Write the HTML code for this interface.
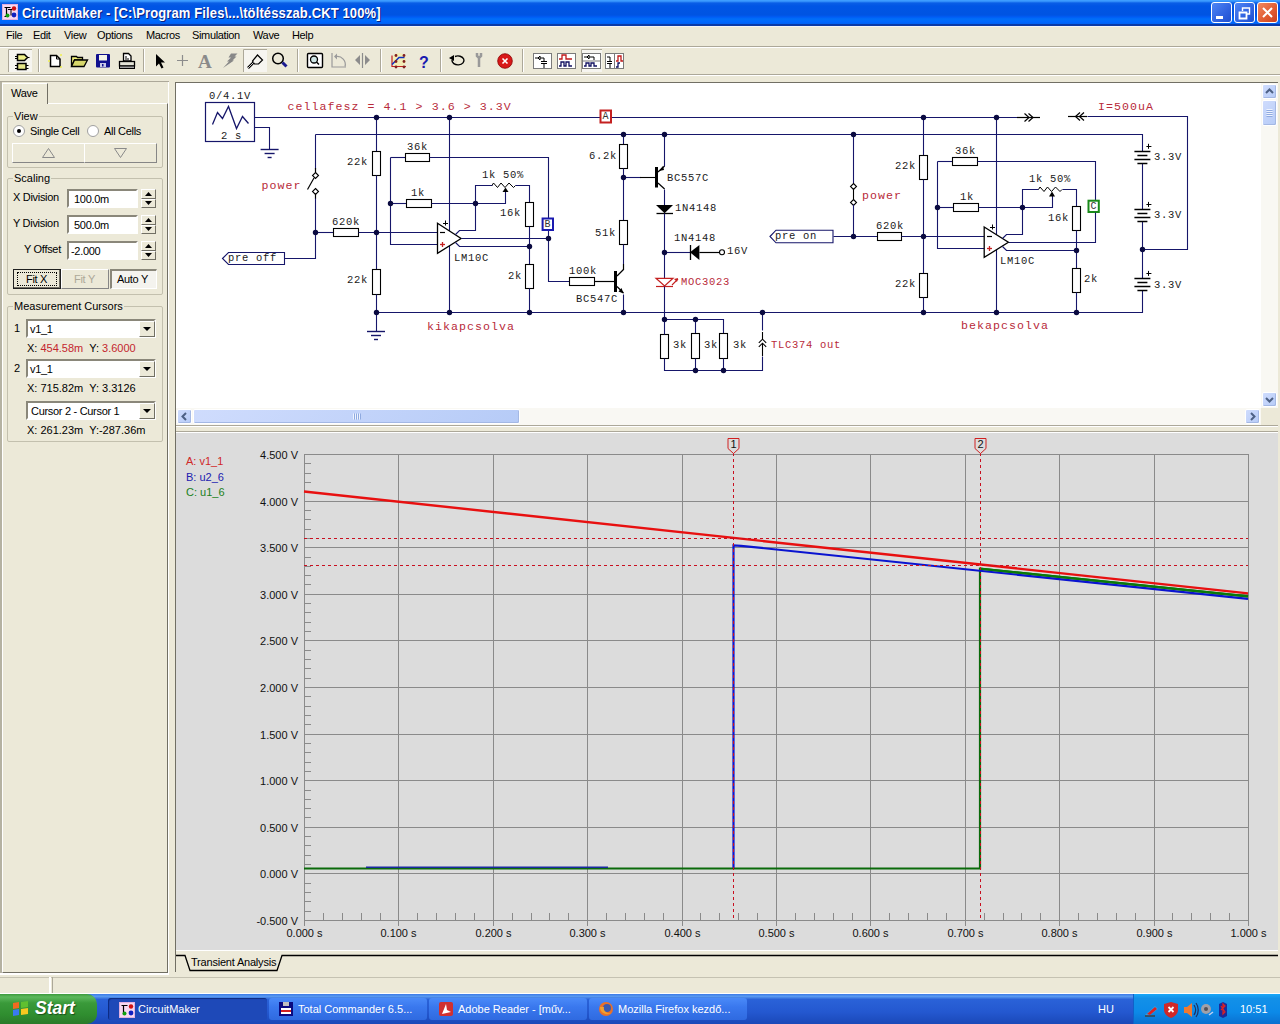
<!DOCTYPE html>
<html><head><meta charset="utf-8">
<style>
*{margin:0;padding:0;box-sizing:border-box}
html,body{width:1280px;height:1024px;overflow:hidden;background:#ece9d8;font-family:"Liberation Sans",sans-serif;font-size:11px;color:#000}
.a{position:absolute}
#title{left:0;top:0;width:1280px;height:26px;background:linear-gradient(#3d9cff 0px,#3d9cff 1px,#0a5ee6 3px,#0055e5 6px,#0054e2 15px,#005cf5 17px,#006ef8 19px,#0066ff 22px,#0062f4 23.5px,#0a3aa8 24.5px,#0a3aa8 26px)}
#title .t{left:22px;top:5px;color:#fff;font-weight:bold;font-size:13px;letter-spacing:0.12px;text-shadow:1px 1px #0a1e80;transform:scaleY(1.08);transform-origin:0 0}
.menu span{position:absolute;top:29px;font-size:11px;letter-spacing:-0.35px}
.tb{background:#ece9d8}
.sep{position:absolute;width:1px;background:#aca899;border-right:1px solid #fff}
.pressed{position:absolute;background:#f4f3ee;border:1px solid #b8b5a5;border-right-color:#fff;border-bottom-color:#fff}
.grp{position:absolute;border:1px solid #c3c0ae;border-radius:2px}
.grp .gt{position:absolute;left:6px;top:-7px;background:#ece9d8;padding:0 1px}
.tbx{position:absolute;background:#fff;border:1px solid #7f9db9}
.btn{position:absolute;border:1px solid #868686;background:#ece9d8;text-align:center}
.lbl{position:absolute;white-space:nowrap}
#left .lbl{letter-spacing:-0.3px}
.sbb{background:linear-gradient(135deg,#cfdcfd,#b6cbf7);border:1px solid #fff;border-radius:2px;box-shadow:inset -1px -1px 0 #a4b8e4}
</style></head><body>
<div class="a" style="left:0;top:0;width:1280px;height:1024px;overflow:hidden">

<!-- TITLE BAR -->
<div id="title" class="a">
  <div class="a t">CircuitMaker - [C:\Program Files\...\töltésszab.CKT 100%]</div>
</div>

<!-- MENU -->
<div class="a" style="left:0;top:26px;width:1280px;height:1px;background:#f4f4f6"></div>
<div class="menu">
<span style="left:6px">File</span><span style="left:33px">Edit</span><span style="left:64px">View</span><span style="left:97px">Options</span><span style="left:146px">Macros</span><span style="left:192px">Simulation</span><span style="left:253px">Wave</span><span style="left:292px">Help</span>
</div>
<div class="a" style="left:0;top:46px;width:1280px;height:1px;background:#aca899"></div>
<div class="a" style="left:0;top:47px;width:1280px;height:1px;background:#fff"></div>
<div class="a" style="left:0;top:74px;width:1280px;height:1px;background:#aca899"></div>
<div class="a" style="left:0;top:75px;width:1280px;height:1px;background:#fff"></div>

<svg class="a" style="left:0;top:44px" width="640" height="32" viewBox="0 44 640 32">
<rect x="8" y="49" width="24" height="23" fill="#f6f5f0"/>
<path d="M8.5 72V49.5H32" stroke="#aca899" fill="none"/>
<rect x="243" y="49" width="24" height="23" fill="#f6f5f0"/>
<path d="M243.5 72V49.5H267" stroke="#aca899" fill="none"/>
<rect x="581" y="49" width="21" height="23" fill="#f6f5f0"/>
<path d="M581.5 72V49.5H602" stroke="#aca899" fill="none"/>
<path d="M38.5 49v23" stroke="#aca899"/><path d="M39.5 49v23" stroke="#fff"/>
<path d="M143.5 49v23" stroke="#aca899"/><path d="M144.5 49v23" stroke="#fff"/>
<path d="M297.5 49v23" stroke="#aca899"/><path d="M298.5 49v23" stroke="#fff"/>
<path d="M380.5 49v23" stroke="#aca899"/><path d="M381.5 49v23" stroke="#fff"/>
<path d="M440.5 49v23" stroke="#aca899"/><path d="M441.5 49v23" stroke="#fff"/>
<path d="M522.5 49v23" stroke="#aca899"/><path d="M523.5 49v23" stroke="#fff"/>
<path d="M17.5 54.5h7l3 3l-3 3h-7z" fill="#eef08a" stroke="#000" stroke-width="1.5"/>
<path d="M15 56.5h2.5M15 58.5h2.5M27.5 57.5h2M15 65.5h2.5M15 68.5h2.5M26 65.5h2.5M26 68.5h2.5" stroke="#000" stroke-width="1.2"/>
<rect x="17.5" y="63.5" width="8.5" height="6" fill="#e6e78a" stroke="#000" stroke-width="1.5"/>
<path d="M50.5 55.5h6l3.5 3.5v7.5h-9.5z" fill="#fff" stroke="#000" stroke-width="1.5"/><path d="M56.5 55.5v3.5h3.5" fill="none" stroke="#000" stroke-width="1"/>
<circle cx="49" cy="61" r="1" fill="#f0f050"/><circle cx="61" cy="55" r="1" fill="#f0f050"/><circle cx="61" cy="67" r="1" fill="#f0f050"/>
<path d="M71.5 56.5h5l1 1h5v2.5h-8l-3 6.5z" fill="#f0f07a" stroke="#000" stroke-width="1.3"/><path d="M71.5 66.5l3-6.5h13l-3.5 6.5z" fill="#d6d66a" stroke="#000" stroke-width="1.3"/>
<rect x="96" y="54" width="14" height="13.5" rx="1" fill="#10108e"/><rect x="99" y="55" width="8" height="5.5" fill="#f4f4e8"/><rect x="100" y="63" width="6" height="4" fill="#c8c8e8"/><rect x="102" y="64" width="1.5" height="2.5" fill="#10108e"/>
<path d="M123.5 53.5h5l2.5 2.5v5h-7.5z" fill="#fff" stroke="#000" stroke-width="1.3"/><path d="M125 57h2M125 59h4" stroke="#000"/>
<rect x="119.5" y="61.5" width="15" height="4.5" fill="#e4e4d8" stroke="#000" stroke-width="1.3"/><rect x="119.5" y="66" width="15" height="2.5" fill="#a0a0a0" stroke="#000" stroke-width="1"/>
<path d="M156 54L156 66.5L159 63.5L161.5 68.5L163.5 67.5L161 62.5L165 62.5Z" fill="#000"/>
<path d="M177 60.5h11M182.5 55v11" stroke="#8c8c8c" stroke-width="1.2"/>
<text x="198" y="68" font-family="Liberation Serif" font-weight="bold" font-size="19" fill="#8a8a8a">A</text>
<path d="M231 53.5l6.5 0l-3 3l2 0l-4 4l1.5 0l-11 7.5l6-6.5l-2 0l4-4l-2.5 0z" fill="#888"/>
<path d="M257.5 55l5 5l-4 4l-4 0l-2-3z" fill="none" stroke="#000" stroke-width="1.2"/><path d="M253.5 62.5l-5.5 5.5" stroke="#000" stroke-width="2.5"/><path d="M253.5 62.5l-5.5 5.5" stroke="#fff" stroke-width="0.8"/>
<circle cx="278" cy="58.5" r="5.3" fill="none" stroke="#000" stroke-width="1.5"/><path d="M282.5 62.5l4 4" stroke="#1a1a90" stroke-width="3"/>
<rect x="307.5" y="53.5" width="15" height="14" rx="1" fill="#fff" stroke="#000" stroke-width="1.4"/><circle cx="314" cy="59.5" r="3.5" fill="#cfe6e6" stroke="#000" stroke-width="1.3"/><path d="M316.5 62l2.5 2.5" stroke="#000" stroke-width="1.5"/>
<path d="M332 53v14h14" fill="none" stroke="#9a9a9a" stroke-width="1.2"/><path d="M336 56.5a8 8 0 0 1 9 10" fill="none" stroke="#9a9a9a" stroke-width="1.2"/><path d="M334 56.5l3-3v6z" fill="#9a9a9a"/>
<path d="M355 60l5-5v10z M370 60l-5-5v10z" fill="#8c8c8c"/><path d="M362.5 53v15" stroke="#8c8c8c" stroke-width="1.2"/>
<circle cx="399" cy="60" r="7" fill="#f8f0a0" opacity="0.6"/><path d="M392 55.5v11h14" fill="none" stroke="#c02020" stroke-width="1.2"/><path d="M392 64.5l7-7h5.5" fill="none" stroke="#1030c0" stroke-width="1.5"/><g fill="#802020"><circle cx="396" cy="55.5" r="1.4"/><circle cx="404" cy="55.5" r="1.4"/><circle cx="396" cy="61.5" r="1.4"/><circle cx="404" cy="61.5" r="1.4"/><circle cx="396" cy="67" r="1.4"/><circle cx="404" cy="67" r="1.4"/></g>
<text x="419" y="68" font-family="Liberation Sans" font-weight="bold" font-size="16" fill="#1a1ab0">?</text>
<path d="M452 60a6 4.5 0 1 0 3-3.5" fill="none" stroke="#000" stroke-width="1.4"/><path d="M449 58l5-3v6z" fill="#000"/>
<path d="M477 53v3l2 2l2-2v-3M479 58v9" stroke="#999" stroke-width="2.5" fill="none"/>
<circle cx="505" cy="61" r="7.3" fill="#d81818"/><circle cx="505" cy="61" r="7.3" fill="none" stroke="#8a0000" stroke-width="0.8"/><path d="M502.5 58.5l5 5M507.5 58.5l-5 5" stroke="#fff" stroke-width="1.6"/>
<rect x="533.5" y="53.5" width="18" height="15" fill="#fff" stroke="#7a7a7a" stroke-width="1"/>
<rect x="557.5" y="53.5" width="18" height="15" fill="#fff" stroke="#7a7a7a" stroke-width="1"/>
<rect x="582.5" y="53.5" width="18" height="15" fill="#fff" stroke="#7a7a7a" stroke-width="1"/>
<rect x="605.5" y="53.5" width="18" height="15" fill="#fff" stroke="#7a7a7a" stroke-width="1"/>
<path d="M535 58h3l2-2v4l-2-2M540 58h4v3M541 61.5h6M541 63.5h6M544 64v4" fill="none" stroke="#000" stroke-width="1"/>
<path d="M559 59h3v-4h4v4h6" fill="none" stroke="#c01818" stroke-width="1.3"/><path d="M559 66h2v-4h3v4h2v-4h3v4h3" fill="none" stroke="#101060" stroke-width="1.3"/>
<path d="M584 57h3l2-2v4l-2-2M589 57h5v3" fill="none" stroke="#000" stroke-width="1"/><path d="M582.5 61h18" stroke="#7a7a7a"/><path d="M584 66h2v-3h3v3h2v-3h3v3h3" fill="none" stroke="#101060" stroke-width="1.3"/>
<path d="M607 57h3v4M607 61.5h5M607 63.5h5M610 64v4" fill="none" stroke="#000" stroke-width="1"/><path d="M614.5 53.5v15" stroke="#7a7a7a"/><path d="M616 61h2v-5h3v5h2" fill="none" stroke="#c01818" stroke-width="1.3"/><path d="M616 67h2v-4h2" fill="none" stroke="#101060" stroke-width="1.3"/>
</svg>
<!-- LEFT PANEL -->
<div id="left">
  <div class="a" style="left:0;top:81px;width:2px;height:893px;background:#b5b2a2"></div>
  <!-- tab page -->
  <div class="a" style="left:0;top:81px;width:169px;height:891px;border-top:1px solid #aca899"></div>
  <div class="a" style="left:2px;top:103px;width:166px;height:870px;border:1px solid #fff;border-right:1px solid #716f64;border-bottom:1px solid #716f64"></div>
  <div class="a" style="left:168px;top:82px;width:1px;height:892px;background:#fff"></div>
  <div class="a" style="left:0;top:973px;width:169px;height:2px;background:#fff"></div>
  <!-- tab -->
  <div class="a" style="left:2px;top:83px;width:46px;height:21px;background:#ece9d8;border-left:1px solid #fff;border-top:1px solid #fff;border-right:1px solid #716f64"></div>
  <div class="lbl" style="left:11px;top:87px">Wave</div>
  <!-- View group -->
  <div class="grp" style="left:7px;top:116px;width:156px;height:52px"><span class="gt" style="left:5px">View</span></div>
  <div class="a" style="left:13px;top:125px;width:12px;height:12px;border-radius:50%;background:#fff;border:1px solid #a0a0a0"></div>
  <div class="a" style="left:17px;top:129px;width:4px;height:4px;border-radius:50%;background:#000"></div>
  <div class="lbl" style="left:30px;top:125px">Single Cell</div>
  <div class="a" style="left:87px;top:125px;width:12px;height:12px;border-radius:50%;background:#fff;border:1px solid #a0a0a0"></div>
  <div class="lbl" style="left:104px;top:125px">All Cells</div>
  <div class="btn" style="left:12px;top:143px;width:73px;height:20px;border-color:#fff #868686 #868686 #fff"></div>
  <div class="btn" style="left:84px;top:143px;width:73px;height:20px;border-color:#fff #868686 #868686 #fff"></div>
  <svg class="a" style="left:0;top:0" width="170" height="170"><path d="M48.5 148.5 L54.5 157.5 L42.5 157.5 Z M114.5 148.5 L126.5 148.5 L120.5 157.5 Z" fill="none" stroke="#8a8a8a" stroke-width="1"/></svg>
  <!-- Scaling group -->
  <div class="grp" style="left:7px;top:178px;width:156px;height:117px"><span class="gt" style="left:5px">Scaling</span></div>
  <div class="lbl" style="left:13px;top:191px">X Division</div>
  <div class="lbl" style="left:13px;top:217px">Y Division</div>
  <div class="lbl" style="left:24px;top:243px">Y Offset</div>
  <div class="tbx" style="left:67px;top:189px;width:71px;height:19px;border:2px solid;border-color:#8a877a #fff #fff #8a877a"><span class="lbl" style="left:5px;top:2px">100.0m</span></div>
  <div class="tbx" style="left:67px;top:215px;width:71px;height:19px;border:2px solid;border-color:#8a877a #fff #fff #8a877a"><span class="lbl" style="left:5px;top:2px">500.0m</span></div>
  <div class="tbx" style="left:67px;top:241px;width:71px;height:19px;border:2px solid;border-color:#8a877a #fff #fff #8a877a"><span class="lbl" style="left:2px;top:2px">-2.000</span></div>
  <div class="a" style="left:141px;top:189px;width:15px;height:10px;background:#ece9d8;border:1px solid;border-color:#fff #716f64 #716f64 #fff"></div><div class="a" style="left:141px;top:199px;width:15px;height:9px;background:#ece9d8;border:1px solid;border-color:#fff #716f64 #716f64 #fff"></div><svg class="a" style="left:141px;top:189px" width="15" height="19"><path d="M4 7 L7.5 3 L11 7 Z M4 12 L11 12 L7.5 16 Z" fill="#000"/></svg><div class="a" style="left:141px;top:215px;width:15px;height:10px;background:#ece9d8;border:1px solid;border-color:#fff #716f64 #716f64 #fff"></div><div class="a" style="left:141px;top:225px;width:15px;height:9px;background:#ece9d8;border:1px solid;border-color:#fff #716f64 #716f64 #fff"></div><svg class="a" style="left:141px;top:215px" width="15" height="19"><path d="M4 7 L7.5 3 L11 7 Z M4 12 L11 12 L7.5 16 Z" fill="#000"/></svg><div class="a" style="left:141px;top:241px;width:15px;height:10px;background:#ece9d8;border:1px solid;border-color:#fff #716f64 #716f64 #fff"></div><div class="a" style="left:141px;top:251px;width:15px;height:9px;background:#ece9d8;border:1px solid;border-color:#fff #716f64 #716f64 #fff"></div><svg class="a" style="left:141px;top:241px" width="15" height="19"><path d="M4 7 L7.5 3 L11 7 Z M4 12 L11 12 L7.5 16 Z" fill="#000"/></svg>
  <div class="btn" style="left:13px;top:269px;width:48px;height:20px;border:1px solid #202020;box-shadow:inset -1px -1px 0 #716f64;background:#ece9d8"></div>
  <div class="a" style="left:17px;top:272px;width:40px;height:14px;border:1px dotted #000"></div>
  <div class="lbl" style="left:26px;top:273px">Fit X</div>
  <div class="btn" style="left:61px;top:269px;width:48px;height:20px;border-color:#fff #868686 #868686 #fff"></div>
  <div class="lbl" style="left:74px;top:273px;color:#aca899">Fit Y</div>
  <div class="btn" style="left:110px;top:269px;width:47px;height:20px;background:#f4f3ee;border-width:2px 1px 1px 2px;border-color:#8a877a #fff #fff #8a877a"></div>
  <div class="lbl" style="left:117px;top:273px">Auto Y</div>
  <!-- Measurement group -->
  <div class="grp" style="left:7px;top:306px;width:156px;height:136px"><span class="gt" style="left:5px">Measurement Cursors</span></div>
  <div class="lbl" style="left:14px;top:322px">1</div>
  <div class="tbx" style="left:26px;top:319px;width:130px;height:19px;border:2px solid;border-color:#8a877a #fff #fff #8a877a"><span class="lbl" style="left:2px;top:2px">v1_1</span></div>
  <div class="lbl" style="left:27px;top:342px;letter-spacing:0">X: <span style="color:#c4262e">454.58m</span>&nbsp; Y: <span style="color:#c4262e">3.6000</span></div>
  <div class="lbl" style="left:14px;top:362px">2</div>
  <div class="tbx" style="left:26px;top:359px;width:130px;height:19px;border:2px solid;border-color:#8a877a #fff #fff #8a877a"><span class="lbl" style="left:2px;top:2px">v1_1</span></div>
  <div class="lbl" style="left:27px;top:382px;letter-spacing:0">X: 715.82m&nbsp; Y: 3.3126</div>
  <div class="tbx" style="left:26px;top:401px;width:130px;height:19px;border:2px solid;border-color:#8a877a #fff #fff #8a877a"><span class="lbl" style="left:3px;top:2px">Cursor 2 - Cursor 1</span></div>
  <div class="lbl" style="left:27px;top:424px;letter-spacing:0">X: 261.23m&nbsp; Y:-287.36m</div>
  <div class="a" style="left:139px;top:321px;width:16px;height:16px;background:#ece9d8;border:1px solid;border-color:#fff #716f64 #716f64 #fff"></div><svg class="a" style="left:139px;top:321px" width="16" height="16"><path d="M4 6 L12 6 L8 10 Z" fill="#000"/></svg><div class="a" style="left:139px;top:361px;width:16px;height:16px;background:#ece9d8;border:1px solid;border-color:#fff #716f64 #716f64 #fff"></div><svg class="a" style="left:139px;top:361px" width="16" height="16"><path d="M4 6 L12 6 L8 10 Z" fill="#000"/></svg><div class="a" style="left:139px;top:403px;width:16px;height:16px;background:#ece9d8;border:1px solid;border-color:#fff #716f64 #716f64 #fff"></div><svg class="a" style="left:139px;top:403px" width="16" height="16"><path d="M4 6 L12 6 L8 10 Z" fill="#000"/></svg>
</div>

<!-- SCHEMATIC WINDOW -->
<div class="a" style="left:175px;top:82px;width:1103px;height:1px;background:#716f64"></div>
<div class="a" style="left:175px;top:82px;width:1px;height:890px;background:#716f64;z-index:5"></div>
<div class="a" style="left:176px;top:83px;width:1085px;height:325px;background:#fff;overflow:hidden">
<svg width="1085" height="325" viewBox="176 83 1085 325" style="position:absolute;left:0;top:0;font-family:'Liberation Mono',monospace">
<polyline points="254.5,117.5 1017.5,117.5" fill="none" stroke="#16166a" stroke-width="1.1"/>
<polyline points="315.5,134.5 1142.5,134.5 1142.5,151.5" fill="none" stroke="#16166a" stroke-width="1.1"/>
<polyline points="376.5,312.5 1142.5,312.5 1142.5,290.5" fill="none" stroke="#16166a" stroke-width="1.1"/>
<rect x="205.5" y="102.5" width="49" height="39" fill="#fff" stroke="#16166a" stroke-width="1.2"/>
<polyline points="212.5,124.5 217.5,112.5 222.5,118.5 228.5,106.5 236.5,128.5 242.5,116.5 248.5,123.5" fill="none" stroke="#16166a" stroke-width="1.3"/>
<text x="209" y="99" fill="#1a1a1a" font-size="10.5" letter-spacing="0.7" font-weight="normal" xml:space="preserve">0/4.1V</text>
<text x="221" y="139" fill="#1a1a1a" font-size="10.5" letter-spacing="0.7" font-weight="normal" xml:space="preserve">2 s</text>
<polyline points="254.5,127.5 269.5,127.5 269.5,149.5" fill="none" stroke="#16166a" stroke-width="1.1"/>
<line x1="260.6" y1="149.5" x2="278.6" y2="149.5" stroke="#16166a" stroke-width="1.4"/>
<line x1="264.6" y1="153.5" x2="274.6" y2="153.5" stroke="#16166a" stroke-width="1.4"/>
<line x1="267.6" y1="157.5" x2="271.6" y2="157.5" stroke="#16166a" stroke-width="1.4"/>
<text x="287.5" y="109.7" fill="#b82a3a" font-size="11.6" letter-spacing="1.05" font-weight="normal" xml:space="preserve">cellafesz = 4.1 &gt; 3.6 &gt; 3.3V</text>
<rect x="600.5" y="110.5" width="10.5" height="12.0" fill="#fff" stroke="#c42020" stroke-width="2"/>
<text x="602.5" y="119.0" fill="#333" font-size="10" letter-spacing="0.7" font-weight="normal" xml:space="preserve">A</text>
<line x1="1017" y1="117.5" x2="1040" y2="117.5" stroke="#000" stroke-width="1.2"/>
<polyline points="1024.5,113.5 1029,117.5 1024.5,121.5" fill="none" stroke="#000" stroke-width="1.2"/>
<polyline points="1028.5,113.5 1033,117.5 1028.5,121.5" fill="none" stroke="#000" stroke-width="1.2"/>
<line x1="1068" y1="116.5" x2="1087" y2="116.5" stroke="#000" stroke-width="1.2"/>
<polyline points="1080,112.5 1075.5,116.5 1080,120.5" fill="none" stroke="#000" stroke-width="1.2"/>
<polyline points="1084,112.5 1079.5,116.5 1084,120.5" fill="none" stroke="#000" stroke-width="1.2"/>
<polyline points="1087.5,116.5 1187.5,116.5 1187.5,249.5 1142.5,249.5" fill="none" stroke="#16166a" stroke-width="1.1"/>
<text x="1098" y="110" fill="#b82a3a" font-size="11.6" letter-spacing="1.05" font-weight="normal" xml:space="preserve">I=500uA</text>
<polyline points="315.5,134.5 315.5,169.5" fill="none" stroke="#16166a" stroke-width="1.1"/>
<line x1="315.5" y1="168" x2="315.5" y2="172.5" stroke="#000" stroke-width="1.2"/>
<polygon points="315.5,172.5 318.5,175.5 315.5,178.5 312.5,175.5" fill="#fff" stroke="#000" stroke-width="1.1"/>
<line x1="307.5" y1="189.5" x2="314" y2="178" stroke="#000" stroke-width="1.2"/>
<polygon points="315.5,188.5 318.5,191.5 315.5,194.5 312.5,191.5" fill="#fff" stroke="#000" stroke-width="1.1"/>
<line x1="315.5" y1="193.5" x2="315.5" y2="199" stroke="#000" stroke-width="1.2"/>
<polyline points="315.5,198.5 315.5,258.5 284.5,258.5" fill="none" stroke="#16166a" stroke-width="1.1"/>
<text x="261.5" y="189" fill="#b82a3a" font-size="11.6" letter-spacing="1.05" font-weight="normal" xml:space="preserve">power</text>
<polygon points="222.5,258.5 228.5,252.5 284.5,252.5 284.5,264.5 228.5,264.5" fill="#fff" stroke="#16166a" stroke-width="1.1"/>
<text x="228" y="261.0" fill="#1a1a1a" font-size="10.5" letter-spacing="0.7" font-weight="normal" xml:space="preserve">pre off</text>
<polyline points="315.5,232.5 333.5,232.5" fill="none" stroke="#16166a" stroke-width="1.1"/>
<rect x="333.5" y="228.5" width="25.0" height="8" fill="#fff" stroke="#000" stroke-width="1.1"/>
<polyline points="358.5,232.5 437.5,232.5" fill="none" stroke="#16166a" stroke-width="1.1"/>
<text x="332" y="225" fill="#1a1a1a" font-size="10.5" letter-spacing="0.7" font-weight="normal" xml:space="preserve">620k</text>
<polyline points="376.5,117.5 376.5,151.5" fill="none" stroke="#16166a" stroke-width="1.1"/>
<rect x="372.5" y="151.5" width="8" height="24.0" fill="#fff" stroke="#000" stroke-width="1.1"/>
<polyline points="376.5,175.5 376.5,269.5" fill="none" stroke="#16166a" stroke-width="1.1"/>
<rect x="372.5" y="269.5" width="8" height="25.0" fill="#fff" stroke="#000" stroke-width="1.1"/>
<polyline points="376.5,294.5 376.5,331.5" fill="none" stroke="#16166a" stroke-width="1.1"/>
<line x1="367" y1="331.5" x2="385" y2="331.5" stroke="#16166a" stroke-width="1.4"/>
<line x1="371" y1="335.5" x2="381" y2="335.5" stroke="#16166a" stroke-width="1.4"/>
<line x1="374" y1="339.5" x2="378" y2="339.5" stroke="#16166a" stroke-width="1.4"/>
<text x="347" y="165" fill="#1a1a1a" font-size="10.5" letter-spacing="0.7" font-weight="normal" xml:space="preserve">22k</text>
<text x="347" y="283" fill="#1a1a1a" font-size="10.5" letter-spacing="0.7" font-weight="normal" xml:space="preserve">22k</text>
<polyline points="390.5,157.5 405.5,157.5" fill="none" stroke="#16166a" stroke-width="1.1"/>
<rect x="405.5" y="153.5" width="24.0" height="8" fill="#fff" stroke="#000" stroke-width="1.1"/>
<polyline points="429.5,157.5 548.5,157.5 548.5,218.5" fill="none" stroke="#16166a" stroke-width="1.1"/>
<text x="407" y="150" fill="#1a1a1a" font-size="10.5" letter-spacing="0.7" font-weight="normal" xml:space="preserve">36k</text>
<polyline points="548.5,230.5 548.5,281.5 569.5,281.5" fill="none" stroke="#16166a" stroke-width="1.1"/>
<rect x="542.6" y="218.5" width="10.399999999999977" height="11.5" fill="#fff" stroke="#1a1ab0" stroke-width="2"/>
<text x="544.6" y="226.5" fill="#333" font-size="10" letter-spacing="0.7" font-weight="normal" xml:space="preserve">B</text>
<rect x="569.5" y="277.5" width="25.0" height="8" fill="#fff" stroke="#000" stroke-width="1.1"/>
<text x="569" y="274" fill="#1a1a1a" font-size="10.5" letter-spacing="0.7" font-weight="normal" xml:space="preserve">100k</text>
<polyline points="594.5,281.5 615.5,281.5" fill="none" stroke="#000" stroke-width="1.2"/>
<polyline points="390.5,157.5 390.5,244.5 437.5,244.5" fill="none" stroke="#16166a" stroke-width="1.1"/>
<polyline points="390.5,203.5 406.5,203.5" fill="none" stroke="#16166a" stroke-width="1.1"/>
<rect x="406.5" y="199.5" width="25.0" height="8" fill="#fff" stroke="#000" stroke-width="1.1"/>
<polyline points="431.5,203.5 505.5,203.5 505.5,191.5" fill="none" stroke="#16166a" stroke-width="1.1"/>
<text x="411" y="196" fill="#1a1a1a" font-size="10.5" letter-spacing="0.7" font-weight="normal" xml:space="preserve">1k</text>
<polyline points="475.5,203.5 475.5,185.5 492.5,185.5" fill="none" stroke="#16166a" stroke-width="1.1"/>
<polyline points="492.0,185.5 493.5,183.0 497.5,187.5 501.0,183.0 505.0,187.5 509.0,183.0 513.5,187.5 515.5,185.5" fill="none" stroke="#000" stroke-width="1"/>
<polyline points="515.5,185.5 529.5,185.5 529.5,202.5" fill="none" stroke="#16166a" stroke-width="1.1"/>
<polygon points="505.5,187.5 502.5,192 508.5,192" fill="#000"/>
<text x="482" y="178" fill="#1a1a1a" font-size="10.5" letter-spacing="0.7" font-weight="normal" xml:space="preserve">1k 50%</text>
<rect x="525.5" y="202.5" width="8" height="24.0" fill="#fff" stroke="#000" stroke-width="1.1"/>
<polyline points="529.5,226.5 529.5,264.5" fill="none" stroke="#16166a" stroke-width="1.1"/>
<rect x="525.5" y="264.5" width="8" height="24.0" fill="#fff" stroke="#000" stroke-width="1.1"/>
<polyline points="529.5,288.5 529.5,312.5" fill="none" stroke="#16166a" stroke-width="1.1"/>
<text x="500" y="216" fill="#1a1a1a" font-size="10.5" letter-spacing="0.7" font-weight="normal" xml:space="preserve">16k</text>
<text x="508" y="279" fill="#1a1a1a" font-size="10.5" letter-spacing="0.7" font-weight="normal" xml:space="preserve">2k</text>
<polyline points="449.5,117.5 449.5,312.5" fill="none" stroke="#16166a" stroke-width="1.1"/>
<polygon points="437.5,223.3 461.1,238.5 437.5,253.3" fill="#fff" stroke="#000" stroke-width="1.3"/>
<polyline points="461.5,238.5 548.5,238.5" fill="none" stroke="#16166a" stroke-width="1.1"/>
<polyline points="455.5,234.5 459.5,230.5 475.5,230.5 475.5,203.5" fill="none" stroke="#16166a" stroke-width="1.1"/>
<polyline points="455.5,242.5 459.5,246.5 529.5,246.5" fill="none" stroke="#16166a" stroke-width="1.1"/>
<line x1="440" y1="232.5" x2="445" y2="232.5" stroke="#000" stroke-width="1.2"/>
<line x1="440" y1="244.5" x2="445" y2="244.5" stroke="#c42020" stroke-width="1.3"/>
<line x1="442.5" y1="242" x2="442.5" y2="247" stroke="#c42020" stroke-width="1.3"/>
<line x1="443" y1="223.5" x2="448" y2="223.5" stroke="#000" stroke-width="1"/>
<line x1="445.5" y1="220.5" x2="445.5" y2="225.5" stroke="#000" stroke-width="1"/>
<text x="454" y="261" fill="#1a1a1a" font-size="10.5" letter-spacing="0.7" font-weight="normal" xml:space="preserve">LM10C</text>
<text x="427" y="330" fill="#b82a3a" font-size="11.6" letter-spacing="1.05" font-weight="normal" xml:space="preserve">kikapcsolva</text>
<polyline points="623.5,134.5 623.5,144.5" fill="none" stroke="#16166a" stroke-width="1.1"/>
<rect x="619.5" y="144.5" width="8" height="24.0" fill="#fff" stroke="#000" stroke-width="1.1"/>
<polyline points="623.5,168.5 623.5,220.5" fill="none" stroke="#16166a" stroke-width="1.1"/>
<rect x="619.5" y="220.5" width="8" height="24.0" fill="#fff" stroke="#000" stroke-width="1.1"/>
<polyline points="623.5,244.5 623.5,264.5" fill="none" stroke="#16166a" stroke-width="1.1"/>
<text x="589" y="159" fill="#1a1a1a" font-size="10.5" letter-spacing="0.7" font-weight="normal" xml:space="preserve">6.2k</text>
<text x="595" y="236" fill="#1a1a1a" font-size="10.5" letter-spacing="0.7" font-weight="normal" xml:space="preserve">51k</text>
<polyline points="623.5,177.5 641.5,177.5" fill="none" stroke="#16166a" stroke-width="1.1"/>
<line x1="640" y1="177.5" x2="655" y2="177.5" stroke="#000" stroke-width="1.1"/>
<rect x="655" y="167" width="3" height="20.5" fill="#000"/>
<line x1="658" y1="172" x2="664.6" y2="166" stroke="#000" stroke-width="1.2"/>
<polygon points="659,171 663,166 664,170" fill="#000"/>
<line x1="658" y1="183" x2="664.6" y2="189" stroke="#000" stroke-width="1.2"/>
<polyline points="664.5,134.5 664.5,166.5" fill="none" stroke="#16166a" stroke-width="1.1"/>
<polyline points="664.5,189.5 664.5,205.5" fill="none" stroke="#16166a" stroke-width="1.1"/>
<text x="667" y="181" fill="#1a1a1a" font-size="10.5" letter-spacing="0.7" font-weight="normal" xml:space="preserve">BC557C</text>
<polygon points="656,205 673,205 664.6,213.2" fill="#000"/>
<line x1="656.5" y1="213.5" x2="673" y2="213.5" stroke="#000" stroke-width="1.3"/>
<text x="675" y="211" fill="#1a1a1a" font-size="10.5" letter-spacing="0.7" font-weight="normal" xml:space="preserve">1N4148</text>
<polyline points="664.5,213.5 664.5,278.5" fill="none" stroke="#16166a" stroke-width="1.1"/>
<polyline points="664.5,252.5 690.5,252.5" fill="none" stroke="#16166a" stroke-width="1.1"/>
<polygon points="699.4,245 699.4,260 690,252.3" fill="#000"/>
<line x1="690.5" y1="245" x2="690.5" y2="260" stroke="#000" stroke-width="1.3"/>
<line x1="699.4" y1="252.5" x2="719.5" y2="252.5" stroke="#000" stroke-width="1.2"/>
<circle cx="722" cy="252.3" r="2.5" fill="#fff" stroke="#000" stroke-width="1.1"/>
<text x="674" y="241" fill="#1a1a1a" font-size="10.5" letter-spacing="0.7" font-weight="normal" xml:space="preserve">1N4148</text>
<text x="727" y="254" fill="#1a1a1a" font-size="10.5" letter-spacing="0.7" font-weight="normal" xml:space="preserve">16V</text>
<polygon points="656,278.3 673,278.3 664.6,286" fill="none" stroke="#c42020" stroke-width="1.2"/>
<line x1="656" y1="286.5" x2="673" y2="286.5" stroke="#c42020" stroke-width="1.2"/>
<line x1="672" y1="285" x2="678" y2="279" stroke="#c42020" stroke-width="1.1"/>
<polygon points="678,278 674,279 677,282" fill="#c42020"/>
<text x="681" y="285" fill="#b82a3a" font-size="10.5" letter-spacing="0.7" font-weight="normal" xml:space="preserve">MOC3023</text>
<polyline points="664.5,286.5 664.5,319.5 723.5,319.5 723.5,333.5" fill="none" stroke="#16166a" stroke-width="1.1"/>
<rect x="614" y="271" width="3" height="21" fill="#000"/>
<line x1="617" y1="276" x2="623.5" y2="269.5" stroke="#000" stroke-width="1.2"/>
<line x1="623.5" y1="264" x2="623.5" y2="270" stroke="#000" stroke-width="1.2"/>
<line x1="617" y1="286.5" x2="623.5" y2="293" stroke="#000" stroke-width="1.2"/>
<polygon points="623.5,293.5 618.5,291.5 621.5,288" fill="#000"/>
<polyline points="623.5,294.5 623.5,312.5" fill="none" stroke="#16166a" stroke-width="1.1"/>
<text x="576" y="302" fill="#1a1a1a" font-size="10.5" letter-spacing="0.7" font-weight="normal" xml:space="preserve">BC547C</text>
<rect x="660.5" y="334.5" width="8" height="24.0" fill="#fff" stroke="#000" stroke-width="1.1"/>
<polyline points="695.5,319.5 695.5,333.5" fill="none" stroke="#16166a" stroke-width="1.1"/>
<rect x="691.5" y="333.5" width="8" height="25.0" fill="#fff" stroke="#000" stroke-width="1.1"/>
<rect x="719.5" y="333.5" width="8" height="25.0" fill="#fff" stroke="#000" stroke-width="1.1"/>
<polyline points="664.5,319.5 664.5,334.5" fill="none" stroke="#16166a" stroke-width="1.1"/>
<polyline points="695.5,358.5 695.5,370.5" fill="none" stroke="#16166a" stroke-width="1.1"/>
<polyline points="723.5,358.5 723.5,370.5" fill="none" stroke="#16166a" stroke-width="1.1"/>
<text x="673" y="348" fill="#1a1a1a" font-size="10.5" letter-spacing="0.7" font-weight="normal" xml:space="preserve">3k</text>
<text x="704" y="348" fill="#1a1a1a" font-size="10.5" letter-spacing="0.7" font-weight="normal" xml:space="preserve">3k</text>
<text x="733" y="348" fill="#1a1a1a" font-size="10.5" letter-spacing="0.7" font-weight="normal" xml:space="preserve">3k</text>
<polyline points="664.5,358.5 664.5,370.5 762.5,370.5 762.5,356.5" fill="none" stroke="#16166a" stroke-width="1.1"/>
<polyline points="762.5,312.5 762.5,330.5" fill="none" stroke="#16166a" stroke-width="1.1"/>
<line x1="762.5" y1="332" x2="762.5" y2="339.5" stroke="#000" stroke-width="1.1"/>
<line x1="762.5" y1="343.5" x2="762.5" y2="356" stroke="#000" stroke-width="1.1"/>
<polyline points="758.8,342.8 762.5,339.2 766.2,342.8" fill="none" stroke="#000" stroke-width="1.1"/>
<polyline points="758.8,346.8 762.5,343.2 766.2,346.8" fill="none" stroke="#000" stroke-width="1.1"/>
<text x="771" y="348" fill="#b82a3a" font-size="10.5" letter-spacing="0.7" font-weight="normal" xml:space="preserve">TLC374 out</text>
<polyline points="853.5,134.5 853.5,183.5" fill="none" stroke="#16166a" stroke-width="1.1"/>
<polygon points="853.5,183.5 856.5,186.5 853.5,189.5 850.5,186.5" fill="#fff" stroke="#000" stroke-width="1.1"/>
<line x1="853.5" y1="188.5" x2="853.5" y2="199.5" stroke="#000" stroke-width="1.1"/>
<polygon points="853.5,199.5 856.5,202.5 853.5,205.5 850.5,202.5" fill="#fff" stroke="#000" stroke-width="1.1"/>
<polyline points="853.5,204.5 853.5,236.5" fill="none" stroke="#16166a" stroke-width="1.1"/>
<text x="862" y="199" fill="#b82a3a" font-size="11.6" letter-spacing="1.05" font-weight="normal" xml:space="preserve">power</text>
<polygon points="770,236.5 776,230.2 833,230.2 833,242.8 776,242.8" fill="#fff" stroke="#16166a" stroke-width="1.1"/>
<text x="775" y="239.3" fill="#1a1a1a" font-size="10.5" letter-spacing="0.7" font-weight="normal" xml:space="preserve">pre on</text>
<polyline points="833.5,236.5 877.5,236.5" fill="none" stroke="#16166a" stroke-width="1.1"/>
<rect x="877.5" y="232.5" width="24.0" height="8" fill="#fff" stroke="#000" stroke-width="1.1"/>
<polyline points="901.5,236.5 984.5,236.5" fill="none" stroke="#16166a" stroke-width="1.1"/>
<text x="876" y="229" fill="#1a1a1a" font-size="10.5" letter-spacing="0.7" font-weight="normal" xml:space="preserve">620k</text>
<polyline points="923.5,117.5 923.5,155.5" fill="none" stroke="#16166a" stroke-width="1.1"/>
<rect x="919.5" y="155.5" width="8" height="24.0" fill="#fff" stroke="#000" stroke-width="1.1"/>
<polyline points="923.5,179.5 923.5,273.5" fill="none" stroke="#16166a" stroke-width="1.1"/>
<rect x="919.5" y="273.5" width="8" height="24.0" fill="#fff" stroke="#000" stroke-width="1.1"/>
<polyline points="923.5,297.5 923.5,312.5" fill="none" stroke="#16166a" stroke-width="1.1"/>
<text x="895" y="169" fill="#1a1a1a" font-size="10.5" letter-spacing="0.7" font-weight="normal" xml:space="preserve">22k</text>
<text x="895" y="287" fill="#1a1a1a" font-size="10.5" letter-spacing="0.7" font-weight="normal" xml:space="preserve">22k</text>
<polyline points="937.5,161.5 952.5,161.5" fill="none" stroke="#16166a" stroke-width="1.1"/>
<rect x="952.5" y="157.5" width="25.0" height="8" fill="#fff" stroke="#000" stroke-width="1.1"/>
<polyline points="977.5,161.5 1095.5,161.5 1095.5,200.5" fill="none" stroke="#16166a" stroke-width="1.1"/>
<text x="955" y="154" fill="#1a1a1a" font-size="10.5" letter-spacing="0.7" font-weight="normal" xml:space="preserve">36k</text>
<rect x="1088.5" y="200.7" width="10.299999999999955" height="11.300000000000011" fill="#fff" stroke="#1a8a1a" stroke-width="2"/>
<text x="1090.5" y="208.5" fill="#333" font-size="10" letter-spacing="0.7" font-weight="normal" xml:space="preserve">C</text>
<polyline points="1095.5,212.5 1095.5,242.5 1008.5,242.5" fill="none" stroke="#16166a" stroke-width="1.1"/>
<polyline points="937.5,161.5 937.5,248.5 984.5,248.5" fill="none" stroke="#16166a" stroke-width="1.1"/>
<polyline points="937.5,207.5 953.5,207.5" fill="none" stroke="#16166a" stroke-width="1.1"/>
<rect x="953.5" y="203.5" width="25.0" height="8" fill="#fff" stroke="#000" stroke-width="1.1"/>
<polyline points="978.5,207.5 1052.5,207.5 1052.5,193.5" fill="none" stroke="#16166a" stroke-width="1.1"/>
<polygon points="1052,191.5 1049,196.5 1055,196.5" fill="#000"/>
<text x="960" y="200" fill="#1a1a1a" font-size="10.5" letter-spacing="0.7" font-weight="normal" xml:space="preserve">1k</text>
<polyline points="1022.5,207.5 1022.5,189.5 1038.5,189.5" fill="none" stroke="#16166a" stroke-width="1.1"/>
<polyline points="1038.5,189.5 1040.0,187.0 1044.0,191.5 1047.5,187.0 1051.5,191.5 1055.5,187.0 1060.0,191.5 1062.0,189.5" fill="none" stroke="#000" stroke-width="1"/>
<polyline points="1062.5,189.5 1076.5,189.5 1076.5,206.5" fill="none" stroke="#16166a" stroke-width="1.1"/>
<text x="1029" y="182" fill="#1a1a1a" font-size="10.5" letter-spacing="0.7" font-weight="normal" xml:space="preserve">1k 50%</text>
<rect x="1072.5" y="206.5" width="8" height="24.0" fill="#fff" stroke="#000" stroke-width="1.1"/>
<polyline points="1076.5,230.5 1076.5,268.5" fill="none" stroke="#16166a" stroke-width="1.1"/>
<rect x="1072.5" y="268.5" width="8" height="24.0" fill="#fff" stroke="#000" stroke-width="1.1"/>
<polyline points="1076.5,292.5 1076.5,312.5" fill="none" stroke="#16166a" stroke-width="1.1"/>
<text x="1048" y="221" fill="#1a1a1a" font-size="10.5" letter-spacing="0.7" font-weight="normal" xml:space="preserve">16k</text>
<text x="1084" y="282" fill="#1a1a1a" font-size="10.5" letter-spacing="0.7" font-weight="normal" xml:space="preserve">2k</text>
<polyline points="996.5,117.5 996.5,312.5" fill="none" stroke="#16166a" stroke-width="1.1"/>
<polygon points="984.2,227 1008.4,242.2 984.2,257.4" fill="#fff" stroke="#000" stroke-width="1.3"/>
<polyline points="1002.5,238.5 1006.5,234.5 1022.5,234.5 1022.5,207.5" fill="none" stroke="#16166a" stroke-width="1.1"/>
<polyline points="1002.5,246.5 1006.5,250.5 1076.5,250.5" fill="none" stroke="#16166a" stroke-width="1.1"/>
<line x1="987" y1="236.5" x2="992" y2="236.5" stroke="#000" stroke-width="1.2"/>
<line x1="987" y1="248.5" x2="992" y2="248.5" stroke="#c42020" stroke-width="1.3"/>
<line x1="989.5" y1="246" x2="989.5" y2="251" stroke="#c42020" stroke-width="1.3"/>
<line x1="990" y1="227.5" x2="995" y2="227.5" stroke="#000" stroke-width="1"/>
<line x1="992.5" y1="224.5" x2="992.5" y2="229.5" stroke="#000" stroke-width="1"/>
<text x="1000" y="264" fill="#1a1a1a" font-size="10.5" letter-spacing="0.7" font-weight="normal" xml:space="preserve">LM10C</text>
<text x="961" y="329" fill="#b82a3a" font-size="11.6" letter-spacing="1.05" font-weight="normal" xml:space="preserve">bekapcsolva</text>
<polyline points="1142.5,163.5 1142.5,209.5" fill="none" stroke="#16166a" stroke-width="1.1"/>
<polyline points="1142.5,221.5 1142.5,278.5" fill="none" stroke="#16166a" stroke-width="1.1"/>
<line x1="1134.4" y1="151.5" x2="1150.4" y2="151.5" stroke="#000" stroke-width="1.5"/>
<line x1="1137.4" y1="155.5" x2="1147.4" y2="155.5" stroke="#000" stroke-width="1.5"/>
<line x1="1134.4" y1="159.5" x2="1150.4" y2="159.5" stroke="#000" stroke-width="1.5"/>
<line x1="1137.4" y1="163.5" x2="1147.4" y2="163.5" stroke="#000" stroke-width="1.5"/>
<line x1="1146.4" y1="146.5" x2="1151.4" y2="146.5" stroke="#000" stroke-width="1"/>
<line x1="1148.5" y1="143.8" x2="1148.5" y2="148.8" stroke="#000" stroke-width="1"/>
<line x1="1134.4" y1="209.5" x2="1150.4" y2="209.5" stroke="#000" stroke-width="1.5"/>
<line x1="1137.4" y1="213.5" x2="1147.4" y2="213.5" stroke="#000" stroke-width="1.5"/>
<line x1="1134.4" y1="217.5" x2="1150.4" y2="217.5" stroke="#000" stroke-width="1.5"/>
<line x1="1137.4" y1="221.5" x2="1147.4" y2="221.5" stroke="#000" stroke-width="1.5"/>
<line x1="1146.4" y1="204.5" x2="1151.4" y2="204.5" stroke="#000" stroke-width="1"/>
<line x1="1148.5" y1="201.9" x2="1148.5" y2="206.9" stroke="#000" stroke-width="1"/>
<line x1="1134.4" y1="278.5" x2="1150.4" y2="278.5" stroke="#000" stroke-width="1.5"/>
<line x1="1137.4" y1="282.5" x2="1147.4" y2="282.5" stroke="#000" stroke-width="1.5"/>
<line x1="1134.4" y1="286.5" x2="1150.4" y2="286.5" stroke="#000" stroke-width="1.5"/>
<line x1="1137.4" y1="290.5" x2="1147.4" y2="290.5" stroke="#000" stroke-width="1.5"/>
<line x1="1146.4" y1="273.5" x2="1151.4" y2="273.5" stroke="#000" stroke-width="1"/>
<line x1="1148.5" y1="270.9" x2="1148.5" y2="275.9" stroke="#000" stroke-width="1"/>
<text x="1154" y="160" fill="#1a1a1a" font-size="10.5" letter-spacing="0.7" font-weight="normal" xml:space="preserve">3.3V</text>
<text x="1154" y="218" fill="#1a1a1a" font-size="10.5" letter-spacing="0.7" font-weight="normal" xml:space="preserve">3.3V</text>
<text x="1154" y="288" fill="#1a1a1a" font-size="10.5" letter-spacing="0.7" font-weight="normal" xml:space="preserve">3.3V</text>
<circle cx="376.5" cy="117.5" r="2.7" fill="#0a0a40"/>
<circle cx="449.5" cy="117.5" r="2.7" fill="#0a0a40"/>
<circle cx="923.5" cy="117.5" r="2.7" fill="#0a0a40"/>
<circle cx="996.5" cy="117.5" r="2.7" fill="#0a0a40"/>
<circle cx="623.5" cy="134.5" r="2.7" fill="#0a0a40"/>
<circle cx="664.5" cy="134.5" r="2.7" fill="#0a0a40"/>
<circle cx="853.5" cy="134.5" r="2.7" fill="#0a0a40"/>
<circle cx="315.5" cy="232.5" r="2.7" fill="#0a0a40"/>
<circle cx="376.5" cy="232.5" r="2.7" fill="#0a0a40"/>
<circle cx="390.5" cy="203.5" r="2.7" fill="#0a0a40"/>
<circle cx="475.5" cy="203.5" r="2.7" fill="#0a0a40"/>
<circle cx="548.5" cy="238.5" r="2.7" fill="#0a0a40"/>
<circle cx="529.5" cy="246.5" r="2.7" fill="#0a0a40"/>
<circle cx="623.5" cy="177.5" r="2.7" fill="#0a0a40"/>
<circle cx="376.5" cy="312.5" r="2.7" fill="#0a0a40"/>
<circle cx="449.5" cy="312.5" r="2.7" fill="#0a0a40"/>
<circle cx="529.5" cy="312.5" r="2.7" fill="#0a0a40"/>
<circle cx="623.5" cy="312.5" r="2.7" fill="#0a0a40"/>
<circle cx="762.5" cy="312.5" r="2.7" fill="#0a0a40"/>
<circle cx="923.5" cy="312.5" r="2.7" fill="#0a0a40"/>
<circle cx="996.5" cy="312.5" r="2.7" fill="#0a0a40"/>
<circle cx="1076.5" cy="312.5" r="2.7" fill="#0a0a40"/>
<circle cx="664.5" cy="252.5" r="2.7" fill="#0a0a40"/>
<circle cx="664.5" cy="319.5" r="2.7" fill="#0a0a40"/>
<circle cx="695.5" cy="319.5" r="2.7" fill="#0a0a40"/>
<circle cx="695.5" cy="370.5" r="2.7" fill="#0a0a40"/>
<circle cx="723.5" cy="370.5" r="2.7" fill="#0a0a40"/>
<circle cx="853.5" cy="236.5" r="2.7" fill="#0a0a40"/>
<circle cx="923.5" cy="236.5" r="2.7" fill="#0a0a40"/>
<circle cx="937.5" cy="207.5" r="2.7" fill="#0a0a40"/>
<circle cx="1022.5" cy="207.5" r="2.7" fill="#0a0a40"/>
<circle cx="1076.5" cy="250.5" r="2.7" fill="#0a0a40"/>
<circle cx="1142.5" cy="249.5" r="2.7" fill="#0a0a40"/>
</svg></div>
<div class="a" style="left:1261px;top:83px;width:17px;height:325px;background:#f9f8f3"></div>
<div class="a sbb" style="left:1262px;top:84px;width:15px;height:15px"></div>
<div class="a sbb" style="left:1262px;top:100px;width:15px;height:26px"></div>
<div class="a sbb" style="left:1262px;top:392px;width:15px;height:15px"></div>
<svg class="a" style="left:1262px;top:84px" width="15" height="15"><polyline points="4,9 7.5,5.5 11,9" fill="none" stroke="#4d6185" stroke-width="2"/></svg>
<svg class="a" style="left:1262px;top:392px" width="15" height="15"><polyline points="4,6 7.5,9.5 11,6" fill="none" stroke="#4d6185" stroke-width="2"/></svg>
<svg class="a" style="left:1262px;top:100px" width="15" height="26"><path d="M4.5 9.5h6M4.5 11.5h6M4.5 13.5h6M4.5 15.5h6" stroke="#eef3ff" stroke-width="1"/><path d="M4.5 10.5h6M4.5 12.5h6M4.5 14.5h6M4.5 16.5h6" stroke="#8faae0" stroke-width="1"/></svg>
<div class="a" style="left:176px;top:408px;width:1102px;height:17px;background:#f9f8f3"></div>
<div class="a" style="left:1261px;top:408px;width:17px;height:17px;background:#ece9d8"></div>
<div class="a sbb" style="left:177px;top:409px;width:15px;height:15px"></div>
<div class="a sbb" style="left:193px;top:409px;width:327px;height:15px"></div>
<div class="a sbb" style="left:1245px;top:409px;width:15px;height:15px"></div>
<svg class="a" style="left:177px;top:409px" width="15" height="15"><polyline points="9,4 5.5,7.5 9,11" fill="none" stroke="#4d6185" stroke-width="2"/></svg>
<svg class="a" style="left:1245px;top:409px" width="15" height="15"><polyline points="6,4 9.5,7.5 6,11" fill="none" stroke="#4d6185" stroke-width="2"/></svg>
<svg class="a" style="left:193px;top:409px" width="327" height="15"><path d="M160.5 4.5v6M162.5 4.5v6M164.5 4.5v6M166.5 4.5v6" stroke="#eef3ff" stroke-width="1"/><path d="M161.5 4.5v6M163.5 4.5v6M165.5 4.5v6M167.5 4.5v6" stroke="#8faae0" stroke-width="1"/></svg>
<div class="a" style="left:175px;top:425px;width:1103px;height:1px;background:#aca899"></div>
<div class="a" style="left:176px;top:426px;width:1102px;height:1px;background:#fff"></div>
<div class="a" style="left:175px;top:431px;width:1103px;height:1px;background:#aca899"></div>

<!-- GRAPH -->
<div class="a" style="left:175px;top:432px;width:1103px;height:518px;background:#dcdcdc;border-left:1px solid #716f64;border-top:1px solid #fff"></div>
<svg class="a" style="left:176px;top:432px;font-family:'Liberation Sans',sans-serif" width="1102" height="518" viewBox="176 432 1102 518">
<path d="M304.5 454V926 M398.5 454V926 M493.5 454V926 M587.5 454V926 M682.5 454V926 M776.5 454V926 M870.5 454V926 M965.5 454V926 M1059.5 454V926 M1154.5 454V926 M1248.5 454V926 M304 454.5H1249 M304 501.5H1249 M304 547.5H1249 M304 594.5H1249 M304 640.5H1249 M304 687.5H1249 M304 734.5H1249 M304 780.5H1249 M304 827.5H1249 M304 873.5H1249 M304 920.5H1249 M304 463.5h7 M304 473.5h7 M304 482.5h7 M304 491.5h7 M304 510.5h7 M304 519.5h7 M304 529.5h7 M304 538.5h7 M304 557.5h7 M304 566.5h7 M304 575.5h7 M304 584.5h7 M304 603.5h7 M304 612.5h7 M304 622.5h7 M304 631.5h7 M304 650.5h7 M304 659.5h7 M304 668.5h7 M304 678.5h7 M304 696.5h7 M304 706.5h7 M304 715.5h7 M304 724.5h7 M304 743.5h7 M304 752.5h7 M304 762.5h7 M304 771.5h7 M304 790.5h7 M304 799.5h7 M304 808.5h7 M304 817.5h7 M304 836.5h7 M304 845.5h7 M304 855.5h7 M304 864.5h7 M304 883.5h7 M304 892.5h7 M304 901.5h7 M304 911.5h7 M323.5 920.5v-7.5 M342.5 920.5v-7.5 M361.5 920.5v-7.5 M380.5 920.5v-7.5 M417.5 920.5v-7.5 M436.5 920.5v-7.5 M455.5 920.5v-7.5 M474.5 920.5v-7.5 M512.5 920.5v-7.5 M531.5 920.5v-7.5 M549.5 920.5v-7.5 M568.5 920.5v-7.5 M606.5 920.5v-7.5 M625.5 920.5v-7.5 M644.5 920.5v-7.5 M663.5 920.5v-7.5 M700.5 920.5v-7.5 M719.5 920.5v-7.5 M738.5 920.5v-7.5 M757.5 920.5v-7.5 M795.5 920.5v-7.5 M814.5 920.5v-7.5 M833.5 920.5v-7.5 M852.5 920.5v-7.5 M889.5 920.5v-7.5 M908.5 920.5v-7.5 M927.5 920.5v-7.5 M946.5 920.5v-7.5 M984.5 920.5v-7.5 M1003.5 920.5v-7.5 M1021.5 920.5v-7.5 M1040.5 920.5v-7.5 M1078.5 920.5v-7.5 M1097.5 920.5v-7.5 M1116.5 920.5v-7.5 M1135.5 920.5v-7.5 M1172.5 920.5v-7.5 M1191.5 920.5v-7.5 M1210.5 920.5v-7.5 M1229.5 920.5v-7.5" stroke="#8a8a8a" stroke-width="1" fill="none"/>
<text x="298" y="458.5" font-size="11" text-anchor="end" fill="#111">4.500 V</text>
<text x="298" y="505.5" font-size="11" text-anchor="end" fill="#111">4.000 V</text>
<text x="298" y="551.5" font-size="11" text-anchor="end" fill="#111">3.500 V</text>
<text x="298" y="598.5" font-size="11" text-anchor="end" fill="#111">3.000 V</text>
<text x="298" y="644.5" font-size="11" text-anchor="end" fill="#111">2.500 V</text>
<text x="298" y="691.5" font-size="11" text-anchor="end" fill="#111">2.000 V</text>
<text x="298" y="738.5" font-size="11" text-anchor="end" fill="#111">1.500 V</text>
<text x="298" y="784.5" font-size="11" text-anchor="end" fill="#111">1.000 V</text>
<text x="298" y="831.5" font-size="11" text-anchor="end" fill="#111">0.500 V</text>
<text x="298" y="877.5" font-size="11" text-anchor="end" fill="#111">0.000 V</text>
<text x="298" y="924.5" font-size="11" text-anchor="end" fill="#111">-0.500 V</text>
<text x="304.5" y="936.5" font-size="11" text-anchor="middle" fill="#111">0.000 s</text>
<text x="398.5" y="936.5" font-size="11" text-anchor="middle" fill="#111">0.100 s</text>
<text x="493.5" y="936.5" font-size="11" text-anchor="middle" fill="#111">0.200 s</text>
<text x="587.5" y="936.5" font-size="11" text-anchor="middle" fill="#111">0.300 s</text>
<text x="682.5" y="936.5" font-size="11" text-anchor="middle" fill="#111">0.400 s</text>
<text x="776.5" y="936.5" font-size="11" text-anchor="middle" fill="#111">0.500 s</text>
<text x="870.5" y="936.5" font-size="11" text-anchor="middle" fill="#111">0.600 s</text>
<text x="965.5" y="936.5" font-size="11" text-anchor="middle" fill="#111">0.700 s</text>
<text x="1059.5" y="936.5" font-size="11" text-anchor="middle" fill="#111">0.800 s</text>
<text x="1154.5" y="936.5" font-size="11" text-anchor="middle" fill="#111">0.900 s</text>
<text x="1248.5" y="936.5" font-size="11" text-anchor="middle" fill="#111">1.000 s</text>
<text x="186" y="465" font-size="11" fill="#d02828">A: v1_1</text>
<text x="186" y="481" font-size="11" fill="#2020b0">B: u2_6</text>
<text x="186" y="496" font-size="11" fill="#208020">C: u1_6</text>
<polyline points="304,868.5 980,868.5 980,568.6 1248,596.3" fill="none" stroke="#0a6a0a" stroke-width="2.2"/>
<polyline points="366,867.2 608,867.2" fill="none" stroke="#1a2aa0" stroke-width="1.6"/>
<polyline points="733.5,868 733.5,545.5 741,545.8 1248,598.8" fill="none" stroke="#0a14d0" stroke-width="2.2"/>
<polyline points="980,568.6 1248,596.3" fill="none" stroke="#0a7a0a" stroke-width="2.2"/>
<polyline points="304,491.5 1248,593.4" fill="none" stroke="#e81010" stroke-width="2.4"/>
<path d="M304 538.5H1248 M304 565.5H1248" stroke="#c81020" stroke-width="1" stroke-dasharray="3 3" fill="none"/>
<path d="M733.5 453V920 M980.5 453V920" stroke="#c81020" stroke-width="1" stroke-dasharray="3 3" fill="none"/>
<polygon points="728.0,438.5 739.0,438.5 739.0,448.5 733.5,453.5 728.0,448.5" fill="#dcdcdc" stroke="#d02020" stroke-width="1"/>
<text x="733.5" y="448" font-size="11" text-anchor="middle" fill="#111">1</text>
<polygon points="975.0,438.5 986.0,438.5 986.0,448.5 980.5,453.5 975.0,448.5" fill="#dcdcdc" stroke="#d02020" stroke-width="1"/>
<text x="980.5" y="448" font-size="11" text-anchor="middle" fill="#111">2</text>
</svg>
<div class="a" style="left:176px;top:950px;width:1102px;height:1px;background:#fff"></div>
<svg class="a" style="left:176px;top:950px" width="1102" height="25" viewBox="176 950 1102 25"><path d="M176 955.5H185L190 970.5H277L282 955.5H1278" fill="none" stroke="#000" stroke-width="1.3"/></svg>
<div class="lbl" style="left:191px;top:956px;font-size:11px;letter-spacing:-0.2px">Transient Analysis</div>
<div class="a" style="left:175px;top:950px;width:1px;height:22px;background:#716f64"></div>

<!-- STATUS BAR -->

<!-- TASKBAR -->
<div class="a" style="left:0;top:994px;width:1280px;height:30px;background:linear-gradient(#3a7ae8 0%,#5a9af0 8%,#2a62d8 18%,#2458d0 60%,#1a48b8 100%)"></div>
<svg class="a" style="left:2px;top:4px" width="16" height="16"><rect x="0.5" y="0.5" width="15" height="15" fill="#f6d8f0" stroke="#e0b0e0"/><path d="M2.5 3.5h6M4.5 3v10M2.5 12.5h4" stroke="#000" stroke-width="1.2"/><circle cx="12" cy="4.5" r="2.2" fill="#d01010"/><circle cx="12" cy="11" r="2.4" fill="#1020c0"/><circle cx="5.5" cy="11.5" r="2" fill="#10a010"/><path d="M6 5.5h4M9 5.5v6" stroke="#000" stroke-width="1"/></svg>
<div class="a" style="left:1211px;top:2px;width:21px;height:21px;border:1px solid #fff;border-radius:3px;background:linear-gradient(135deg,#4f86f5,#2f62e0 60%,#1e4fd0)"></div>
<div class="a" style="left:1234px;top:2px;width:21px;height:21px;border:1px solid #fff;border-radius:3px;background:linear-gradient(135deg,#4f86f5,#2f62e0 60%,#1e4fd0)"></div>
<div class="a" style="left:1257px;top:2px;width:21px;height:21px;border:1px solid #fff;border-radius:3px;background:linear-gradient(135deg,#f08860,#e05a30 60%,#c84020)"></div>
<svg class="a" style="left:1211px;top:2px" width="67" height="21"><rect x="5" y="14" width="7" height="3" fill="#fff"/><path d="M28.5 10.5h7v6h-7z" fill="none" stroke="#fff" stroke-width="1.8"/><path d="M31.5 9v-3h7v6h-2.5" fill="none" stroke="#fff" stroke-width="1.4"/><path d="M52 6l9 9M61 6l-9 9" stroke="#fff" stroke-width="2"/></svg>
<div class="a" style="left:0;top:977px;width:1280px;height:1px;background:#c5c2b2"></div>
<div class="a" style="left:49px;top:977px;width:2px;height:16px;background:#fff"></div>
<div class="a" style="left:52px;top:977px;width:1px;height:16px;background:#aca899"></div>
<div class="a" style="left:0;top:993px;width:1280px;height:1px;background:#fff"></div>
<div class="a" style="left:0;top:994px;width:97px;height:30px;border-radius:0 10px 10px 0;background:linear-gradient(#3c9a3c 0%,#5cb85c 10%,#3a9a3a 30%,#2f8d2f 70%,#2a7a2a 100%)"></div>
<div class="a" style="left:35px;top:998px;color:#fff;font-style:italic;font-weight:bold;font-size:17.5px;text-shadow:1px 1px 1px #18501a">Start</div>
<svg class="a" style="left:11px;top:1000px" width="19" height="18"><path d="M2 3l6-1v6l-6 1z" fill="#f06a20"/><path d="M10 2l7-1v6l-7 1z" fill="#60c030"/><path d="M2 10l6-1v6l-6 1z" fill="#3a7af0"/><path d="M10 9l7-1v6l-7 1z" fill="#f8c820"/></svg>
<div class="a" style="left:108px;top:998px;width:159px;height:22px;border-radius:3px;background:#1e49b8;box-shadow:inset 1px 1px 1px #0c2a80"></div>
<div class="a" style="left:269px;top:998px;width:158px;height:22px;border-radius:3px;background:linear-gradient(#4a8af8,#3a78ee 40%,#2f6ae0)"></div>
<div class="a" style="left:429px;top:998px;width:158px;height:22px;border-radius:3px;background:linear-gradient(#4a8af8,#3a78ee 40%,#2f6ae0)"></div>
<div class="a" style="left:589px;top:998px;width:158px;height:22px;border-radius:3px;background:linear-gradient(#4a8af8,#3a78ee 40%,#2f6ae0)"></div>
<div class="lbl" style="left:138px;top:1003px;color:#fff;font-size:11px">CircuitMaker</div>
<div class="lbl" style="left:298px;top:1003px;color:#fff;font-size:11px">Total Commander 6.5...</div>
<div class="lbl" style="left:458px;top:1003px;color:#fff;font-size:11px">Adobe Reader - [műv...</div>
<div class="lbl" style="left:618px;top:1003px;color:#fff;font-size:11px">Mozilla Firefox kezdő...</div>
<svg class="a" style="left:119px;top:1002px" width="16" height="16"><rect x="0.5" y="0.5" width="15" height="15" fill="#f6d8f0" stroke="#e0b0e0"/><path d="M2.5 3.5h6M4.5 3v10" stroke="#000" stroke-width="1.2"/><circle cx="12" cy="4.5" r="2.2" fill="#d01010"/><circle cx="12" cy="11" r="2.4" fill="#1020c0"/><circle cx="5.5" cy="11.5" r="2" fill="#10a010"/></svg>
<svg class="a" style="left:278px;top:1001px" width="16" height="16"><rect x="1" y="1" width="14" height="14" fill="#0a0a80"/><rect x="5" y="1" width="6" height="4" fill="#c0c0c0"/><rect x="3" y="7" width="10" height="2" fill="#fff"/><rect x="3" y="9" width="10" height="2" fill="#d02020"/><rect x="3" y="11" width="10" height="2" fill="#fff"/></svg>
<svg class="a" style="left:438px;top:1001px" width="16" height="16"><rect x="1" y="1" width="14" height="14" rx="2" fill="#d03030"/><path d="M4 13l4-10l1 6l4 2z" fill="#fff"/></svg>
<svg class="a" style="left:598px;top:1001px" width="16" height="16"><circle cx="8" cy="8" r="7" fill="#e8702a"/><circle cx="9" cy="7" r="4" fill="#3a5ab0"/><path d="M2 6a7 7 0 0 0 12 5a5 5 0 0 1-8-5z" fill="#f0a030"/></svg>
<div class="a" style="left:1133px;top:994px;width:147px;height:30px;background:linear-gradient(#18a8f8 0%,#1290e8 15%,#0c8ae8 60%,#0a70d0 100%);border-left:1px solid #1060c8"></div>
<div class="lbl" style="left:1098px;top:1003px;color:#fff;font-size:11px">HU</div>
<div class="lbl" style="left:1240px;top:1003px;color:#fff;font-size:11px">10:51</div>
<svg class="a" style="left:1143px;top:1001px" width="90" height="18"><path d="M2 14l10-9l3 3l-9 7z" fill="#30a0e0"/><path d="M4 13l8-7l2 2l-7 6z" fill="#e02020"/><path d="M2 15h10" stroke="#404040" stroke-width="1.5"/><path d="M21 3l7-2l7 2v6c0 4-4 7-7 8c-3-1-7-4-7-8z" fill="#d02828"/><path d="M25.5 6l5 5M30.5 6l-5 5" stroke="#fff" stroke-width="1.8"/><path d="M41 6h3l5-4v14l-5-4h-3z" fill="#f07a30"/><path d="M51 4c2 3 2 7 0 10M53 2c3 4 3 10 0 14" fill="none" stroke="#203060" stroke-width="1.2"/><circle cx="63" cy="8" r="5" fill="#a0a0a8"/><circle cx="63" cy="8" r="2" fill="#505058"/><path d="M66 14l4-3" stroke="#c0d0f0" stroke-width="1.5"/><path d="M80 1l4 2v12l-4 2l-4-2v-12z" fill="#1a2a9a"/><path d="M78 5l4 6l-2 2v-10l2 2l-4 4" fill="none" stroke="#e02020" stroke-width="1.2"/></svg>

</div>
</body></html>
